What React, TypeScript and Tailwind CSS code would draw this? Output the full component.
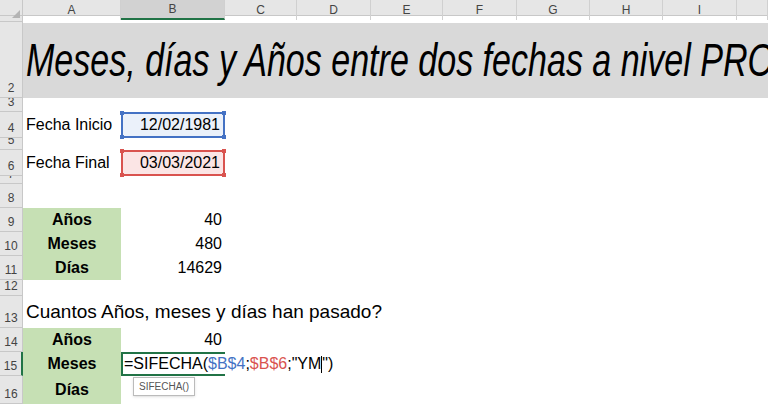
import React from "react";

const cols = "grid-cols-[23px_98px_104px_72px_74px_72px_74px_73px_73px_74px_31px]";
const letters = ["A","B","C","D","E","F","G","H","I",""];

function Row({ n, h, children, sel }: { n: string; h: string; children?: React.ReactNode; sel?: boolean }) {
  return (
    <div className={`flex ${h}`}>
      <div className={`w-[23px] shrink-0 overflow-hidden leading-none bg-[#e6e6e6] border-r border-b border-[#c8c8c8] text-[12px] text-[#444] flex items-end justify-center pb-[3px] ${sel ? "border-r-2 border-r-[#217346] bg-[#d2d2d2]" : ""}`}>{n}</div>
      <div className="flex-1 relative flex">{children}</div>
    </div>
  );
}

export default function App() {
  const f = { fontFamily: '"Liberation Sans", Arial, sans-serif' };
  const corners = ["-left-[3px] -top-[3px]","-right-[3px] -top-[3px]","-left-[3px] -bottom-[3px]","-right-[3px] -bottom-[3px]"];
  return (
    <div className="w-[768px] h-[406px] overflow-hidden bg-white text-black" style={f}>
      <div className={`grid ${cols} h-[16px] bg-[#e6e6e6] border-b border-[#c8c8c8] text-[12px] text-[#444]`}>
        <div className="border-r border-[#c8c8c8] relative"><div className="absolute right-[2px] bottom-[2px] w-0 h-0 border-l-[8px] border-l-transparent border-b-[8px] border-b-[#b4b4b4]" /></div>
        {letters.map((l, i) => (
          <div key={i} className={`flex items-center justify-center border-r border-[#d0d0d0] ${i === 1 ? "bg-[#d2d2d2] border-b-2 border-b-[#217346]" : ""}`}>{l}</div>
        ))}
      </div>
      <Row n="1" h="h-[6px]" />
      <Row n="2" h="h-[76px]">
        <div className="flex-1 bg-[#d9d9d9] mt-[1px] flex items-center pl-[3px] overflow-hidden">
          <span className="text-[46px] italic whitespace-nowrap inline-block origin-left scale-x-[0.74]" style={{ fontFamily: '"Liberation Sans", sans-serif' }}>Meses, días y Años entre dos fechas a nivel PRO</span>
        </div>
      </Row>
      <Row n="3" h="h-[14px]" />
      <Row n="4" h="h-[26px]">
        <div className="w-[98px] flex items-center pl-[3px] text-[16px] whitespace-nowrap">Fecha Inicio</div>
        <div className="w-[104px] relative border-2 border-[#4472c4] bg-[#ebf1fa] flex items-center justify-end pr-[3px] text-[16px]">12/02/1981
          {corners.map((c,i)=><div key={i} className={`absolute ${c} w-[4px] h-[4px] bg-[#4472c4]`} />)}
        </div>
      </Row>
      <Row n="5" h="h-[12px]" />
      <Row n="6" h="h-[26px]">
        <div className="w-[98px] flex items-center pl-[3px] text-[16px] whitespace-nowrap">Fecha Final</div>
        <div className="w-[104px] relative border-2 border-[#d9534f] bg-[#fbe5e5] flex items-center justify-end pr-[3px] text-[16px]">03/03/2021
          {corners.map((c,i)=><div key={i} className={`absolute ${c} w-[4px] h-[4px] bg-[#d9534f]`} />)}
        </div>
      </Row>
      <Row n="7" h="h-[8px]" />
      <Row n="8" h="h-[24px]" />
      {[["9","Años","40"],["10","Meses","480"],["11","Días","14629"]].map(([n,a,b]) => (
        <Row key={n} n={n} h="h-[24px]">
          <div className="w-[98px] bg-[#c6e0b4] flex items-center justify-center font-bold text-[16px]">{a}</div>
          <div className="w-[101px] flex items-center justify-end text-[16px]">{b}</div>
        </Row>
      ))}
      <Row n="12" h="h-[16px]" />
      <Row n="13" h="h-[32px]">
        <div className="flex items-center pl-[3px] text-[19px] whitespace-nowrap">Cuantos Años, meses y días han pasado?</div>
      </Row>
      <Row n="14" h="h-[24px]">
        <div className="w-[98px] bg-[#c6e0b4] flex items-center justify-center font-bold text-[16px]">Años</div>
        <div className="w-[101px] flex items-center justify-end text-[16px]">40</div>
      </Row>
      <Row n="15" h="h-[24px]" sel>
        <div className="w-[98px] bg-[#c6e0b4] flex items-center justify-center font-bold text-[16px]">Meses</div>
        <div className="relative w-[104px] border-2 border-r-0 border-[#217346] flex items-center pl-[1px] text-[16px] whitespace-nowrap overflow-visible">
          <span className="relative z-10">=SIFECHA(<span className="text-[#4472c4]">$B$4</span>;<span className="text-[#d9534f]">$B$6</span>;"YM<span className="inline-block w-[1px] h-[17px] bg-black align-middle" />")</span>
          <div className="absolute left-[10px] top-[23px] border border-[#bbb] bg-white text-[10px] text-[#555] px-[5px] py-[1px] shadow-sm z-10">SIFECHA()</div>
        </div>
      </Row>
      <Row n="16" h="h-[28px]">
        <div className="w-[98px] bg-[#c6e0b4] flex items-center justify-center font-bold text-[16px]">Días</div>
      </Row>
    </div>
  );
}
